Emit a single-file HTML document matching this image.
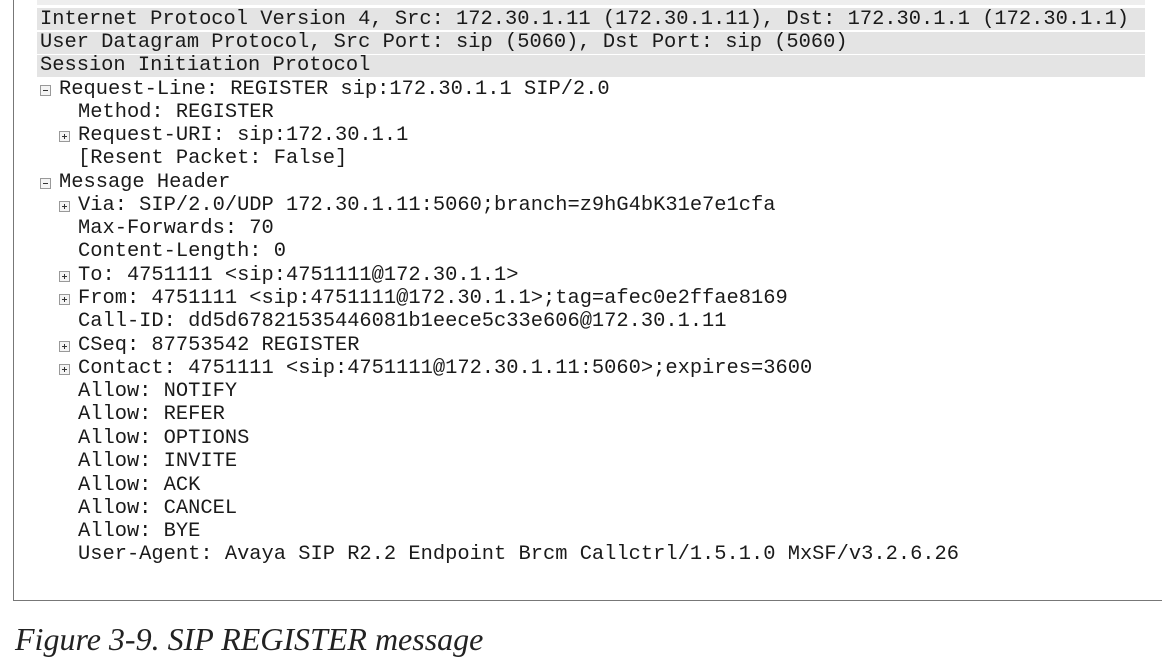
<!DOCTYPE html>
<html><head><meta charset="utf-8"><style>
body{margin:0;width:1162px;height:667px;background:#fff;position:relative;overflow:hidden}
.box{position:absolute;left:13px;top:-2px;width:1160px;height:603px;border:1.5px solid #777;box-sizing:border-box;border-top:none}
.top{position:absolute;left:37px;top:0;width:1108px;height:5px;background:#eee}
.g{position:absolute;left:37px;width:1108px;height:22px;background:#e4e4e4}
.l{position:absolute;font-family:"Liberation Mono",monospace;font-size:20.4px;line-height:23px;color:#1a1a1a;white-space:pre}
.i{position:absolute;width:11px;height:11px;border:1px solid #999;background:#f4f4f4;box-sizing:border-box}
.i::before{content:"";position:absolute;left:2px;top:4px;width:5px;height:1px;background:#333}
.p::after{content:"";position:absolute;left:4px;top:2px;width:1px;height:5px;background:#333}
.cap{position:absolute;left:15px;top:621px;font-family:"Liberation Serif",serif;font-style:italic;font-size:32px;color:#222}
</style></head><body>
<div class="top"></div>
<div class="box"></div>
<div class="g" style="top:8px"></div>
<div class="g" style="top:32px"></div>
<div class="g" style="top:55px"></div>
<div class="l" style="left:40px;top:8px">Internet Protocol Version 4, Src: 172.30.1.11 (172.30.1.11), Dst: 172.30.1.1 (172.30.1.1)</div>
<div class="l" style="left:40px;top:31px">User Datagram Protocol, Src Port: sip (5060), Dst Port: sip (5060)</div>
<div class="l" style="left:40px;top:54px">Session Initiation Protocol</div>
<div class="i" style="left:40px;top:85px"></div><div class="l" style="left:59px;top:78px">Request-Line: REGISTER sip:172.30.1.1 SIP/2.0</div>
<div class="l" style="left:78px;top:101px">Method: REGISTER</div>
<div class="i p" style="left:59px;top:131px"></div><div class="l" style="left:78px;top:124px">Request-URI: sip:172.30.1.1</div>
<div class="l" style="left:78px;top:147px">[Resent Packet: False]</div>
<div class="i" style="left:40px;top:178px"></div><div class="l" style="left:59px;top:171px">Message Header</div>
<div class="i p" style="left:59px;top:201px"></div><div class="l" style="left:78px;top:194px">Via: SIP/2.0/UDP 172.30.1.11:5060;branch=z9hG4bK31e7e1cfa</div>
<div class="l" style="left:78px;top:217px">Max-Forwards: 70</div>
<div class="l" style="left:78px;top:240px">Content-Length: 0</div>
<div class="i p" style="left:59px;top:271px"></div><div class="l" style="left:78px;top:264px">To: 4751111 &lt;sip:4751111@172.30.1.1&gt;</div>
<div class="i p" style="left:59px;top:294px"></div><div class="l" style="left:78px;top:287px">From: 4751111 &lt;sip:4751111@172.30.1.1&gt;;tag=afec0e2ffae8169</div>
<div class="l" style="left:78px;top:310px">Call-ID: dd5d67821535446081b1eece5c33e606@172.30.1.11</div>
<div class="i p" style="left:59px;top:341px"></div><div class="l" style="left:78px;top:334px">CSeq: 87753542 REGISTER</div>
<div class="i p" style="left:59px;top:364px"></div><div class="l" style="left:78px;top:357px">Contact: 4751111 &lt;sip:4751111@172.30.1.11:5060&gt;;expires=3600</div>
<div class="l" style="left:78px;top:380px">Allow: NOTIFY</div>
<div class="l" style="left:78px;top:403px">Allow: REFER</div>
<div class="l" style="left:78px;top:427px">Allow: OPTIONS</div>
<div class="l" style="left:78px;top:450px">Allow: INVITE</div>
<div class="l" style="left:78px;top:474px">Allow: ACK</div>
<div class="l" style="left:78px;top:497px">Allow: CANCEL</div>
<div class="l" style="left:78px;top:520px">Allow: BYE</div>
<div class="l" style="left:78px;top:543px">User-Agent: Avaya SIP R2.2 Endpoint Brcm Callctrl/1.5.1.0 MxSF/v3.2.6.26</div>
<div class="cap">Figure 3-9. SIP REGISTER message</div>
</body></html>
